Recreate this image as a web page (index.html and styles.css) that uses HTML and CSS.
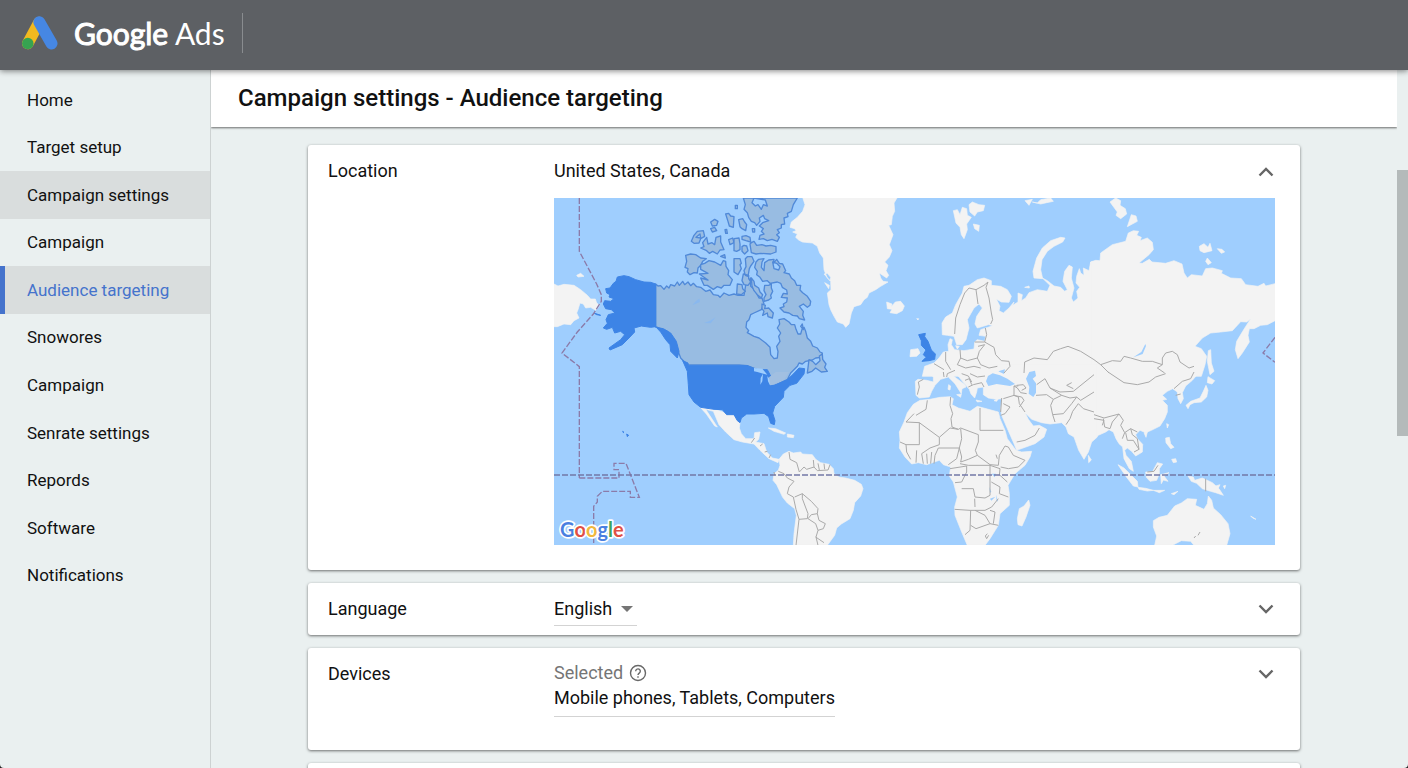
FILE: index.html
```html
<!DOCTYPE html>
<html lang="en">
<head>
<meta charset="utf-8">
<meta name="viewport" content="width=device-width, initial-scale=1">
<title>Google Ads - Campaign settings</title>
<link rel="stylesheet" href="styles.css">
</head>
<body>
<div class="app">
  <header class="topbar">
    <svg class="logo" viewBox="0 0 106 100" aria-hidden="true">
      <path d="M50 19 17 81" stroke="#f2b91f" stroke-width="34" stroke-linecap="round"/>
      <path d="M51 18 87 81" stroke="#4687e3" stroke-width="35" stroke-linecap="round"/>
      <circle cx="17" cy="81" r="17" fill="#37a351"/>
    </svg>
    <span class="brand"><span class="brand-name">Google</span> Ads</span>
    <span class="topbar-rule"></span>
  </header>

  <div class="body">
    <nav class="sidebar" aria-label="Main">
      <ul class="nav">
        <li><a class="nav-link" href="#">Home</a></li>
        <li><a class="nav-link" href="#">Target setup</a></li>
        <li><a class="nav-link shaded" href="#">Campaign settings</a></li>
        <li><a class="nav-link" href="#">Campaign</a></li>
        <li><a class="nav-link shaded current" href="#" aria-current="page">Audience targeting</a></li>
        <li><a class="nav-link" href="#">Snowores</a></li>
        <li><a class="nav-link" href="#">Campaign</a></li>
        <li><a class="nav-link" href="#">Senrate settings</a></li>
        <li><a class="nav-link" href="#">Repords</a></li>
        <li><a class="nav-link" href="#">Software</a></li>
        <li><a class="nav-link" href="#">Notifications</a></li>
      </ul>
    </nav>

    <main class="main">
      <div class="titlebar"><h1 class="title">Campaign settings - Audience targeting</h1></div>
      <div class="cards">
        <section class="card card-location">
          <h2 class="card-label">Location</h2>
          <div class="card-value">United States, Canada</div>
          <button class="toggle" type="button" aria-label="Collapse location"><svg viewBox="0 0 18 12"><path d="M2.500 10.500 9 4 15.500 10.500"/></svg></button>
          <svg class="map" viewBox="0 0 2163 1041" role="img" aria-label="World map with targeted countries">
            <rect width="2163" height="1041" fill="#9fcefe"/>
            <g class="land">
              <path d="M0 258 12 264 30 259 60 262 80 275 100 292 110 303 124 303 128 315 137 322 125 337 110 328 95 330 88 318 78 315 72 335 68 345 75 360 60 368 50 380 30 378 10 386 0 386ZM68 232 80 226 90 235 72 237Z"/>
              <path d="M440 629 480 632 520 647 540 652 558 672 556 690 562 707 575 722 600 722 602 704 618 702 614 724 605 732 630 737 638 762 655 780 675 784 672 794 645 782 618 757 600 738 565 732 540 725 515 702 495 680 478 640 455 634 490 687 482 684 457 648Z"/>
            </g>
            <g class="land" transform="translate(540)">
              <path d="M205-5 213 20 206 40 190 58 172 72 168 88 182 92 186 98 176 102 190 108 185 118 194 126 205 132 235 135 250 145 257 165 268 180 270 215 280 240 290 250 291 275 280 285 285 320 290 335 300 355 310 372 328 378 335 388 345 378 352 345 360 326 380 320 390 305 400 298 405 285 425 275 440 265 462 252 447 250 440 240 436 225 458 240 464 232 456 218 462 202 452 192 466 177 474 158 466 140 477 110 464 82 472 80 475 55 482 40 480 15 492-5ZM270 228 280 226 290 238 288 248ZM272 254 286 262 284 272Z"/>
              <path d="M458 312 474 318 472 326 484 312 500 310 511 324 505 338 488 347 468 344 474 334 460 332Z"/>
            </g>
            <g class="land" transform="translate(540 522)">
              <path d="M135 262 148 246 165 238 178 243 200 240 205 246 235 248 245 262 260 272 285 277 298 290 300 305 315 315 335 318 362 325 382 337 387 350 380 372 362 392 358 415 348 440 322 456 308 468 302 490 280 520H178L180 485 187 430 182 410 160 393 146 376 128 338 117 325 120 305 133 295 138 280Z"/>
              <path d="M103 168 125 170 155 183 150 187 120 178ZM160 186 180 190 178 197 160 195Z"/>
            </g>
            <g class="land" transform="translate(1080)">
              <path d="M85 410 84 375 95 357 115 345 125 320 145 285 150 265 165 262 190 245 210 240 232 248 232 262 260 265 280 275 292 295 285 313 262 312 247 303 258 325 255 338 268 345 285 330 300 312 296 322 312 312 312 285 325 290 322 308 335 300 345 284 370 275 400 280 408 262 385 240 400 248 420 264 440 268 452 280 460 275 447 250 452 220 465 202 475 207 472 240 480 270 472 300 478 312 492 300 488 280 497 268 486 255 488 235 496 212 500 225 510 232 508 210 525 218 530 192 545 190V535H25L32 505 60 495 75 480 88 462 104 460 102 440 108 422 115 425 112 440 122 455 150 458 180 453 182 432 190 425 212 430 215 415 195 412 200 395 240 382 230 378 190 390 183 378 188 355 205 330 195 318 180 330 160 365 165 390 156 425 145 440 128 440 120 415 100 412Z"/>
              <path d="M118 38 130 35 138 50 145 28 158 32 160 52 172 58 158 78 160 95 150 122 142 110 138 88 126 75ZM165 20 175 12 195 20 212 22 208 38 190 42 182 54 168 42ZM178 78 196 82 194 100 182 92Z"/>
              <path d="M360 240 357 220 368 180 385 150 410 128 440 118 453 120 446 132 420 145 400 160 384 185 380 215 386 242ZM333 8 355 4 345 22ZM355 12 370 15 380 5 410 0 418 10 398 14 380 18ZM332 268 345 264 346 270ZM225 380 235 375 242 385ZM125 443 136 445 130 453ZM-10 455 12 452 18 465 8 475-12 476ZM8 362 14 362 12 366Z"/>
            </g>
            <g class="land" transform="translate(1620)">
              <path d="M-10 192 5 187 18 188 20 165 55 140 95 130 103 105 118 98 134 100 128 112 142 118 138 128 160 120 175 133 178 155 165 170 135 195 145 196 166 184 174 192 215 196 240 188 264 198 270 225 280 240 292 230 325 234 335 212 355 210 385 218 382 226 410 240 442 242 455 260 492 265 510 256 515 264 543 257V368L520 380 500 382 480 392 466 392 462 412 466 432 445 465 432 482 424 455 428 430 446 400 470 362 458 372 440 371 415 398 380 402 350 405 325 420 303 445 322 452 338 475 333 500 322 535H-10Z"/>
              <path d="M48 12 65 0 80 8 78 22 94 32 98 48 80 62 66 52 70 42ZM100 86 112 50 126 54 130 70ZM316 145 330 137 342 148 348 136 354 158 330 164 318 158ZM370 152 384 154 392 162 382 166ZM335 190 340 180 352 194 342 200ZM343 458 350 455 352 495 360 520 348 530 340 490Z"/>
            </g>
            <g class="land" transform="translate(1620 522)">
              <path d="M-10-15H320L315 2 295 25 275 42 265 62 268 80 260 95 252 80 250 60 236 50 220 58 205 70 218 82 205 85 220 100 220 120 212 140 198 162 172 175 155 182 138 175 125 188 130 200 146 217 145 240 125 252 113 238 100 228 92 235 96 250 112 268 118 298 106 290 90 260 86 225 75 215 66 200 58 180 45 173 35 180-10 200Z"/>
              <path d="M72 278 90 288 112 310 130 328 132 345 118 342 95 312ZM132 346 155 349 178 355 160 357 135 352ZM155 300 175 300 190 272 206 276 196 290 196 305 188 325 168 328 157 316ZM200 308 225 302 210 312 222 328 208 324 202 335ZM282 312 298 315 302 325 325 318 355 332 375 350 388 370 365 362 350 358 325 350 308 334 292 328ZM218 155 224 158 220 168ZM215 198 226 196 230 215 240 226 230 230 216 212ZM233 262 245 260 248 270 238 272ZM178 355 212 355 196 362ZM232 365 252 358 240 368ZM150 182 160 180 156 196ZM470 432 486 442 476 438ZM365 342 378 338 372 350ZM388 342 395 340 392 350Z"/>
              <path d="M342 14 362 26 354 36 340 32ZM336 40 342 55 338 75 322 90 300 92 288 98 282 110 276 100 290 88 318 78 328 58Z"/>
              <path d="M182 520 188 492 178 465 178 446 195 436 220 430 242 402 262 393 280 380 308 382 304 400 330 412 340 395 343 372 353 385 358 408 380 428 402 455 408 485 398 520H300L290 508 262 506 235 520Z"/>
            </g>
            <g class="land" transform="translate(1008 522)">
              <path d="M76 28 84 22 110 25 130 30 130 15 118 2 110-10 130-25H622V195L605 210 595 240 582 262 566 235 552 195 535 185 528 165 515 152 480 156 455 152 425 142 405 122 415 142 430 162 448 160 470 172 462 195 435 215 380 235 372 215 350 165 335 130 332 110 336 80 318 82 295 78 280 68 280 45 262 48 260 60 254 78 243 66 238 52 215 25 195 0 185-2 190 12 225 38 228 45 216 50 214 65 195 35 175 15 152 22 135 40 125 58 118 75 88 78 78 70ZM200 68 214 66 212 76ZM176 38 182 42 180 54 174 52ZM258 84 276 88 262 90ZM312 86 325 80 320 88Z"/>
              <path d="M70 97 90 85 120 82 150 76 180 74 190 80 186 98 205 108 240 118 262 103 325 120 330 140 345 175 352 200 378 235 395 240 425 238 420 255 405 280 375 305 354 340 358 365 358 400 330 425 325 460 300 500 285 520H232L215 480 195 430 194 405 202 375 190 330 178 312 182 285 160 278 148 265 110 278 85 272 65 276 45 255 28 228 30 205 28 180 42 150 52 122ZM416 384 420 400 408 435 396 462 384 458 382 440 388 410 402 402ZM595 250 604 264 596 272Z"/>
            </g>
            <g class="water" transform="translate(1008 522)">
              <path d="M288 28 294 12 308 4 330 10 352 20 375 36 360 42 320 36 295 42ZM325-2 345-8 342 6ZM408 20 418 0 435-4 438 12 428 20 438 34 438 62 430 75 416 65 418 45ZM305 305 318 305 314 316ZM298 345 304 360 300 362ZM318 368 324 388 320 388ZM300 380 316 374 304 386Z"/>
              <path transform="translate(612 -522)" d="M118 478 142 462 154 438 156 444 146 468Z"/>
            </g>
            <g class="borders" transform="translate(540 522)">
              <path d="M165 240 168 262 188 272 196 300 210 285 218 292 240 285 250 296 282 294 288 278M238 264 240 285M252 274 256 294M270 275 272 292M133 298 150 305 160 318 180 328 165 345 160 365 178 375 186 412 195 442 220 440 222 425 205 380 205 365 182 375M205 365 232 388 252 410 250 425 232 428 222 440 245 455 252 475 268 470 274 455 255 445 250 425M252 475 246 495 252 520M195 442 186 520M245 495 270 512M52 212 62 198M78 222 86 216M92 240 100 238M105 258 110 248M120 300 122 310"/>
            </g>
            <g class="borders" transform="translate(1080)">
              <path d="M122 408 125 360 138 320 152 285 165 270 186 275 192 318M186 275 210 262 222 252 216 268 225 300 232 345 236 365 230 378M214 390 218 410 212 432 240 448 245 470 262 488 285 490 288 505 270 525M182 432 212 432M192 445 212 440 196 460 190 480 160 488 140 480 138 455M190 480 200 500 225 510 250 505M95 462 95 490 110 515M140 480 130 500 155 510 180 505 200 510M60 497 90 515M330 525 332 492 360 480 400 485 418 460 440 452 462 445 500 460 540 485"/>
            </g>
            <g class="borders" transform="translate(1620)">
              <path d="M0 485 20 500 55 488 80 490 90 475 110 480 145 490 175 490 205 500 205 480 215 465 235 460 250 470 258 492 285 510 300 505M20 500 45 525M205 500 190 510 212 525"/>
            </g>
            <g class="borders" transform="translate(1620 522)">
              <path d="M42 0 60 12 90 32 130 38 165 30 185 15 215 5M300 0 290 20 265 28 240 50M0 128 30 138 60 130 75 126 88 145 80 160 92 182 85 200M28 140 32 165 48 170 55 150 75 126M92 182 110 170 130 180M95 182 100 205 118 205 135 232 120 240M110 170 115 188 130 200 135 232M335 320V358M160 300 180 298 192 280M300 498 305 492M312 490 318 480M0 140 30 145 25 160M245 70 260 66"/>
            </g>
            <g class="borders" transform="translate(1008 522)">
              <path d="M78 130 108 112 112 85M85 30 88 45 82 68M72 125 48 150 88 152V218H48M88 152 148 196 180 168 205 172M148 196V218L120 228 95 245M182 75 180 100 188 125 183 140 186 165 205 172 212 168 265 188M270 108V175M270 175H340M265 188V210L256 235 262 250 300 278 325 280M212 170 215 200 208 228 145 228M208 228 215 255 212 270 235 262 262 250M145 228 135 250 132 275M95 245 100 275M80 235 78 272M30 210 48 218 50 240 62 262M110 245 112 275M125 240 122 275M175 278 200 260 208 228M210 275 235 280H300L330 290 328 310M180 290 230 282 230 300 215 330 195 332M300 280V310L300 370 285 378 255 375 250 350 215 350M332 285 355 290 385 285 405 265 370 250 355 225 345 222 328 250 325 280M330 310 352 330M318 248 322 260M304 330 330 345 328 365 355 375M194 412 240 415H285L305 405 325 380M242 415 240 475 225 488M254 380 255 405M242 460 258 470 300 455 325 460M300 455 285 430 255 415M292 485 286 492 290 500 296 490M300 415 315 420 310 455M340 80 372 70 372 42 385 42M372 70 385 75 388 95 405 120M340 95 360 105 345 125 332 130M335 78 332 120M370 70 395 75 402 85 388 105M380 210 405 205 435 190 448 168M372 42 382 48 392 62 410 65M380 40 400 38 408 48 395 55M438 70 470 68 490 82 482 100 488 128 495 150M490 82 515 70 540 78 560 75 572 85 612 60M515 70 480 48 465 20 440 38M480 48 510 60 550 58 612 8M545 32 530 40 550 50M488 128 520 125 545 95 560 75M528 158 540 140 548 118 565 95 580 110 612 120M170 15 172 5 195-5M160 0 162 15M235 45 250 38 275 32 282 45M225 25 238 20 245 38M215 5 235 12 245 30M240 5 262 15 285 12M85 30 100 22"/>
            </g>
            <g class="targeted-soft">
              <path d="M305 258 312 264 320 263 330 274 338 264 345 270 350 260 362 264 370 252 376 262 386 250 392 260 402 252 410 263 418 256 428 266 440 268 455 280 468 276 478 290 492 292 498 298 510 285 525 292 540 288 552 292 570 292 575 262 590 240 590 265 602 275 615 300 624 300 630 318 622 335 600 345 590 350 585 365 578 372 576 388 584 398 580 404 600 415 615 420 635 435 648 448 650 470 660 482 670 480 672 460 668 445 678 430 674 415 680 405 670 390 677 378 675 365 690 362 705 372 712 380 722 380 726 394 732 408 740 408 744 394 750 388 755 400 760 420 770 430 776 444 790 450 798 462 805 465 802 478 785 480 775 486 755 490 745 498 735 495 730 505 710 525 700 545 668 560 650 550 640 530 610 515 580 503 555 501H400L380 480 365 440 340 400 305 386Z"/>
              <path d="M395 172 410 168 425 170 440 180 457 182 446 190 440 202 432 210 430 225 420 224 408 230 400 222 402 212 393 208 398 190ZM440 200 452 196 465 188 482 192 500 202 508 188 515 190 516 205 524 218 522 230 535 245 528 262 510 262 502 270 490 266 478 274 460 262 450 262 440 240 462 246 436 228 462 226 440 214ZM412 130 420 112 430 100 448 98 452 115 440 122 435 135 420 136ZM426 118 438 108 440 120ZM440 150 450 146 446 134 458 118 462 138 474 134 482 140 486 118 500 114 500 132 510 155 498 156 490 168 476 160 466 166 458 158ZM470 72 482 64 492 70 488 82 475 84ZM470 92 482 88 488 98 475 102ZM515 48 524 46 530 54 540 56 538 88 526 84 522 70ZM513 95 518 94 520 106 515 106ZM524 125 536 120 540 134 528 140ZM500 175 512 170 514 180Z"/>
              <path transform="translate(540)" d="M28 0 34 20 30 34 40 44 44 58 52 70 62 74 68 82 78 70 76 60 88 52 92 62 104 68 86 74 76 84 88 92 82 100 90 108 78 112 75 124 88 122 100 128 114 124 130 130 136 118 128 110 136 104 130 95 142 90 142 80 152 78 150 60 162 56 160 46 172 40 178 20 190 0ZM60 0 54 14 64 24 72 20 82 34 88 20 100 24 94 6ZM48 138 52 134 60 130 68 142 84 140 96 144 110 142 126 146 126 162 110 168 80 166 66 168 52 164ZM0 122 15 120 18 138 18 155 8 160 0 158ZM24 146 30 142 38 144 42 158 32 168 24 160ZM14 65 26 62 32 72 38 80 35 98 24 92 18 86ZM24 115 36 113 48 118 50 132 36 128 24 124ZM55 92 62 92 62 102 56 102ZM4 22 10 22 10 32 4 32ZM0 182 18 182 22 196 18 200 22 212 12 230 0 222ZM34 182 40 176 54 176 60 190 50 204 46 212 42 235 34 232 30 218 36 206ZM28 228 44 232 44 242 50 252 42 262 30 260 24 248ZM10 258 24 260 26 272 34 280 22 290 8 288Z"/>
              <path transform="translate(540)" d="M66 192 74 184 90 182 84 192 82 208 90 218 92 194 104 186 120 184 118 196 128 184 136 196 146 198 155 218 150 224 166 228 172 240 182 248 188 262 200 262 198 276 206 284 220 295 230 310 228 322 220 328 208 318 196 325 208 340 206 352 212 366 196 362 190 354 176 352 165 345 150 342 138 330 150 326 148 318 158 312 160 300 142 298 148 286 160 288 158 276 145 268 140 256 130 252 108 256 100 248 86 250 78 238 68 230 70 220 62 208ZM92 262 104 262 112 258 112 270 116 280 110 292 112 300 104 306 90 310 90 300 96 290 90 278ZM84 318 94 322 92 332 104 330 118 345 115 360 102 356 100 345 86 352 90 340 84 332ZM52 240 60 250 62 262 74 270 78 282 86 290 82 300 70 290 60 278 54 264ZM116 192 128 196 138 206 134 216 120 212Z"/>
              <path transform="translate(540)" d="M225 485 236 490 245 500 258 488 256 474 265 468 266 484 276 498 272 508 280 520 262 522 245 510 234 520 220 525ZM200 385 205 378 208 395Z"/>
              <path d="M425 310 436 302 438 312 415 322ZM450 375 468 368 485 358 470 376Z" fill="#8ab8ee" stroke="none"/>
            </g>
            <g class="targeted">
              <path d="M305 258 290 253 270 252 245 245 225 236 210 233 190 237 186 250 178 256 168 270 155 272 158 285 168 290 165 297 180 302 170 310 152 308 148 318 155 332 172 335 183 345 163 350 156 365 160 376 148 390 158 394 175 388 182 405 200 400 212 410 200 425 165 450 168 456 205 440 225 420 242 402 240 390 262 384 290 388 305 386 320 402 335 425 348 440 350 460 370 480 375 460 367 430 350 405 328 392 305 388Z"/>
              <path d="M386 488 402 495 403 503H555L580 503 610 515 640 515 648 530 665 560 700 545 718 528 735 510 752 512 750 528 728 556 708 562 690 580 688 598 662 625 656 645 663 668 661 680 650 676 644 656 630 646 600 648 578 648 562 660 558 674 550 668 540 650 518 650 505 635 480 634 440 628 420 612 405 590 403 560 400 520Z"/>
              <path transform="translate(1080)" d="M14 410 34 406 32 416 42 430 52 456 64 468 62 484 45 488 24 490 36 478 28 470 36 456 22 442 22 428Z"/>
              <path d="M218 708 224 712 220 716ZM206 700 210 703 208 704ZM120 345 140 352 128 350Z"/>
            </g>
            <path d="M600 510 625 512 640 530 628 527 610 522 600 520ZM620 540 627 527 625 550 619 560ZM640 535 650 545 648 562 642 550Z" fill="#9fcefe"/>
            <path d="M645 538 665 522 705 522 690 545 660 560 648 562Z" fill="#a1bfe1"/>
            <g class="lines">
              <path d="M76 0V160L128 258 142 290V310L118 348 70 402 24 465 76 506V840"/>
              <path d="M76 840H195V815H180V796H216L256 898H229V880H145L130 895V912L119 925V1041"/>
              <path d="M2163 418 2127 465 2163 493"/>
              <path d="M0 831H2163" stroke="#7378a6"/>
            </g>
            <text class="map-logo" x="18" y="1016"><tspan fill="#4a7fe0">G</tspan><tspan fill="#df5046">o</tspan><tspan fill="#f0b83f">o</tspan><tspan fill="#4a7fe0">g</tspan><tspan fill="#3fa45c">l</tspan><tspan fill="#df5046">e</tspan></text>
          </svg>
        </section>

        <section class="card card-language">
          <h2 class="card-label"><label for="language">Language</label></h2>
          <div class="card-value">
            <span class="select-wrap">
              <select id="language" class="select"><option>English</option></select>
              <svg class="caret" viewBox="0 0 12 6" aria-hidden="true"><path d="M0 0h12L6 6z" fill="#757575"/></svg>
            </span>
          </div>
          <button class="toggle" type="button" aria-label="Expand language"><svg viewBox="0 0 18 12"><path d="M2.500 2.500 9 9 15.500 2.500"/></svg></button>
        </section>

        <section class="card card-devices">
          <h2 class="card-label">Devices</h2>
          <div class="card-value">
            <div class="hint">Selected
              <svg class="help" viewBox="0 0 18 18" aria-hidden="true"><circle cx="9" cy="9" r="7.500"/><path d="M6.700 7.200a2.300 2.300 0 1 1 3.700 1.800C9.500 9.700 9 10 9 11"/><path d="M9 12.300v1.500"/></svg>
            </div>
            <button class="field" type="button">Mobile phones, Tablets, Computers</button>
          </div>
          <button class="toggle" type="button" aria-label="Expand devices"><svg viewBox="0 0 18 12"><path d="M2.500 2.500 9 9 15.500 2.500"/></svg></button>
        </section>

        <section class="card"></section>
      </div>
    </main>
    <div class="scrollbar"><div class="thumb"></div></div>
  </div>
</div>
</body>
</html>
```
FILE: styles.css
```css
* { box-sizing: border-box; }

body {
  margin: 0;
  background: #222;
  color: #111;
  font: 18px/24px Roboto, "Liberation Sans", sans-serif;
}

h1, h2, ul { margin: 0; padding: 0; font-weight: 400; list-style: none; }
button, select { font: inherit; color: inherit; background: none; border: 0; padding: 0; }
a { color: inherit; text-decoration: none; }

.app {
  display: flex;
  flex-direction: column;
  height: 100vh;
  overflow: hidden;
  background: #eaf0f0;
  border-radius: 0 0 4px 4px;
}

.topbar {
  display: flex;
  flex: none;
  align-items: center;
  height: 70px;
  padding: 0 22px 5px;
  background: #5d6064;
  box-shadow: 0 1px 6px rgba(0, 0, 0, .5);
  position: relative;
  z-index: 2;
}
.logo { width: 36px; height: 34px; margin-right: 16px; fill: none; }
.brand { color: #fff; font: 30px/40px Lato, sans-serif; }
.brand-name { font-weight: 400; -webkit-text-stroke: 1px #fff; }
.topbar-rule { width: 1px; height: 40px; margin-left: 17px; background: #898c8f; }

.body { display: flex; flex: 1; min-height: 0; }

.sidebar {
  flex: none;
  width: 211px;
  padding-top: 6px;
  border-right: 1px solid #cdd2d2;
  font-size: 17px;
}
.nav { display: grid; grid-auto-rows: 1fr; min-height: 523px; }
.nav-link { display: flex; align-items: center; height: 100%; padding-left: 27px; }
.shaded { background: #d9dddd; }
.current { color: #4573cc; box-shadow: inset 5px 0 #4573cc; }

.main { flex: 1; min-width: 0; overflow: hidden; }
.titlebar {
  padding: 12px 27px 13px;
  background: #fff;
  box-shadow: 0 1px 2px rgba(0, 0, 0, .55);
}
.title { font-size: 24px; line-height: 32px; font-weight: 500; }

.cards {
  display: flex;
  flex-direction: column;
  gap: 13px;
  max-width: 992px;
  margin: 18px auto 0;
}
.card {
  display: grid;
  grid-template-columns: 226px 1fr 18px;
  align-items: start;
  min-height: 52px;
  padding: 14px 25px 14px 20px;
  background: #fff;
  border-radius: 3px;
  box-shadow: 0 1px 3px rgba(0, 0, 0, .55);
}
.card-location { padding-bottom: 25px; }
.card-label { font-size: 18px; }
.map { grid-column: 2 / 4; display: block; width: 100%; height: auto; margin-top: 15px; }

.toggle { display: flex; align-items: center; width: 18px; height: 24px; }
.toggle svg { width: 18px; height: 12px; fill: none; stroke: #666; stroke-width: 2.4; }

.select-wrap { display: inline-flex; position: relative; }
.select {
  appearance: none;
  width: 83px;
  height: 29px;
  padding-bottom: 6px;
  border-bottom: 1px solid #d3d3d3;
  border-radius: 0;
}
.caret { position: absolute; right: 4px; top: 9px; width: 12px; height: 6px; pointer-events: none; }
.card-language { padding-bottom: 8px; }
.card-language .card-value { height: 30px; }

.card-devices { padding-bottom: 33px; }
.hint { display: flex; align-items: center; gap: 6px; height: 22px; color: #757575; }
.help { width: 18px; height: 18px; fill: none; stroke: #686868; stroke-width: 1.4; }
.field { height: 33px; padding: 2px 0 6px; border-bottom: 1px solid #d3d3d3; line-height: 24px; }

.scrollbar { flex: none; width: 11px; padding-top: 100px; }
.thumb { height: 266px; background: #b4baba; }

.land { fill: #f3f3f3; stroke: #f3f3f3; stroke-width: 2; stroke-linejoin: round; }
.water { fill: #9fcefe; }
.borders { fill: none; stroke: #aaa; stroke-width: 3; stroke-linejoin: round; }
.targeted { fill: #3d84e6; stroke: #3d84e6; stroke-width: 3; stroke-linejoin: round; }
.targeted-soft { fill: #98bce2; fill-rule: evenodd; stroke: #5089d8; stroke-width: 4; stroke-linejoin: round; }
.lines { fill: none; stroke: #8b7ba9; stroke-width: 4; stroke-dasharray: 18 6; }
.map-logo {
  font: 700 60px Lato, sans-serif;
  stroke: #fff;
  stroke-width: 10px;
  stroke-linejoin: round;
  paint-order: stroke;
}
```
